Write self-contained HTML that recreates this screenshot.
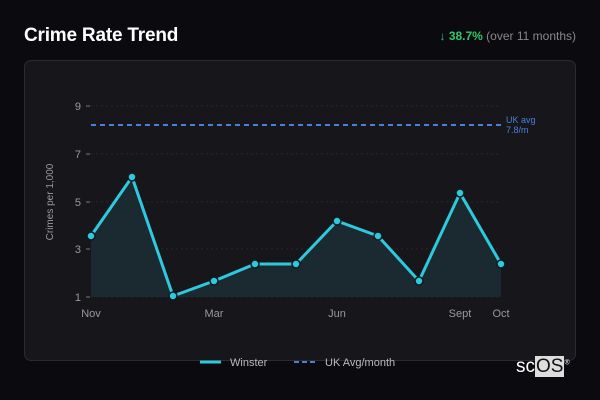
<!DOCTYPE html>
<html><head><meta charset="utf-8"><style>
body{margin:0;width:600px;height:400px;background:#0b0b0f;font-family:"DejaVu Sans","Liberation Sans",sans-serif;overflow:hidden;position:relative;color:#ddd}
.t{position:absolute;left:24px;top:25px;font-size:19px;font-weight:bold;color:#fff;font-family:"Liberation Sans",sans-serif;letter-spacing:-0.2px}
.s{position:absolute;right:24px;top:29px;font-size:12px;color:#888;font-family:"Liberation Sans",sans-serif}
.s b{color:#2ec866}
.card{position:absolute;left:24px;top:60px;width:552px;height:301px;background:#17171b;border:1px solid #2b2b30;border-radius:7px;box-sizing:border-box}
svg{position:absolute;left:0;top:0}
.logo{position:absolute;left:516px;top:356px;font-size:19px;color:#fff;font-family:"Liberation Sans",sans-serif}
.logo span{background:#ddd;color:#111;padding:0 1px}
</style></head><body>
<div class="t">Crime Rate Trend</div>
<div class="s"><b>↓ 38.7%</b> (over 11 months)</div>
<div class="card"></div>
<svg width="600" height="400" font-family="Liberation Sans,sans-serif">
<g stroke="#2a2a2e" stroke-dasharray="2,3" stroke-width="1">
<line x1="91" y1="106" x2="501" y2="106"/><line x1="91" y1="154" x2="501" y2="154"/><line x1="91" y1="202" x2="501" y2="202"/><line x1="91" y1="249" x2="501" y2="249"/><line x1="91" y1="297" x2="501" y2="297"/></g>
<g stroke="#777"><line x1="86" y1="106" x2="90" y2="106"/><line x1="86" y1="154" x2="90" y2="154"/><line x1="86" y1="202" x2="90" y2="202"/><line x1="86" y1="249" x2="90" y2="249"/><line x1="86" y1="297" x2="90" y2="297"/></g>
<g fill="#999" font-size="11" text-anchor="end"><text x="81" y="110">9</text><text x="81" y="158">7</text><text x="81" y="206">5</text><text x="81" y="253">3</text><text x="81" y="301">1</text></g>
<text transform="translate(53,202) rotate(-90)" fill="#999" font-size="10" text-anchor="middle">Crimes per 1,000</text>
<g fill="#999" font-size="11" text-anchor="middle"><text x="91" y="317">Nov</text><text x="214" y="317">Mar</text><text x="337" y="317">Jun</text><text x="460" y="317">Sept</text><text x="501" y="317">Oct</text></g>
<line x1="91" y1="125" x2="501" y2="125" stroke="#4a7fdc" stroke-width="2" stroke-dasharray="5,4"/>
<text x="506" y="123" fill="#4a7fdc" font-size="9">UK avg</text><text x="506" y="133" fill="#4a7fdc" font-size="9">7.8/m</text>
<polygon fill="#1b2a30" points="91,297 91,236 132,177 173,296 214,281 255,264 296,264 337,221 378,236 419,281 460,193 501,264 501,297"/>
<polyline fill="none" stroke="#2ec9de" stroke-width="3" stroke-linejoin="round" points="91,236 132,177 173,296 214,281 255,264 296,264 337,221 378,236 419,281 460,193 501,264"/>
<g fill="#2ec9de" stroke="#0d1a1e" stroke-width="1.5">
<circle cx="91" cy="236" r="4"/><circle cx="132" cy="177" r="4"/><circle cx="173" cy="296" r="4"/><circle cx="214" cy="281" r="4"/><circle cx="255" cy="264" r="4"/><circle cx="296" cy="264" r="4"/><circle cx="337" cy="221" r="4"/><circle cx="378" cy="236" r="4"/><circle cx="419" cy="281" r="4"/><circle cx="460" cy="193" r="4"/><circle cx="501" cy="264" r="4"/></g>
<line x1="200" y1="362" x2="221" y2="362" stroke="#2ec9de" stroke-width="3"/>
<text x="230" y="366" fill="#bbb" font-size="11">Winster</text>
<line x1="294" y1="362" x2="316" y2="362" stroke="#4a7fdc" stroke-width="2" stroke-dasharray="5,3"/>
<text x="325" y="366" fill="#bbb" font-size="11">UK Avg/month</text>
</svg>
<div class="logo">sc<span>OS</span><sup style="font-size:7px">®</sup></div>
</body></html>
